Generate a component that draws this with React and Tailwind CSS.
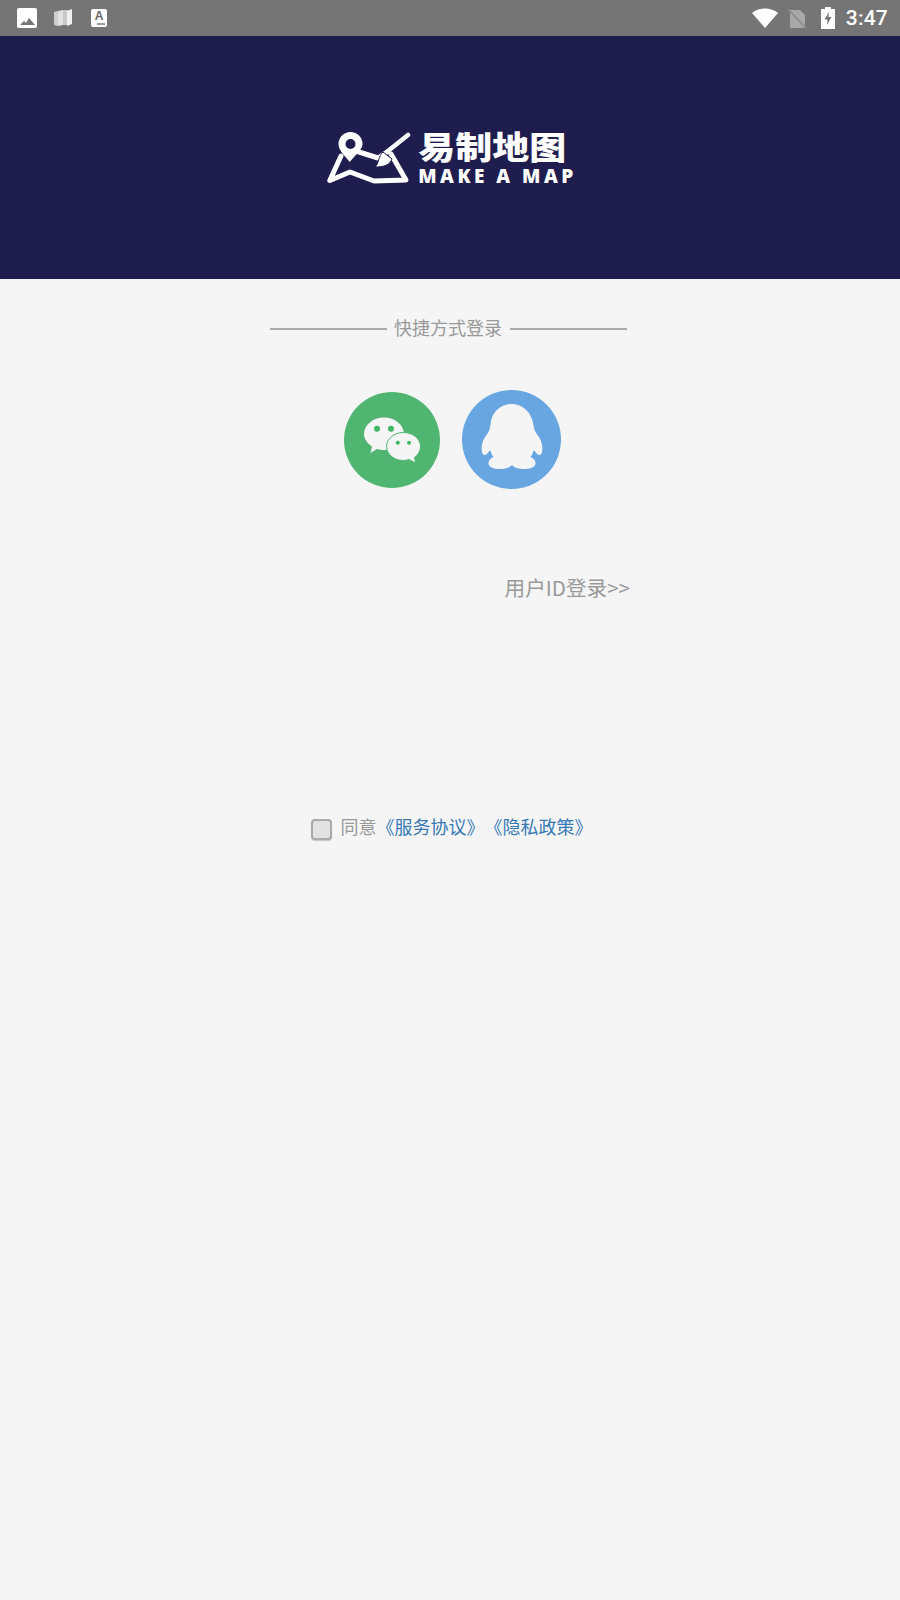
import React from "react";

const cjk = { fontFamily: '"Noto Sans CJK SC", "Noto Sans", sans-serif' };

const StatusBar = () => (
    <div className="flex h-9 items-center justify-between bg-[#757575] pl-[17px] pr-[12px]">
        <div className="flex items-center">
            {/* image */}
            <svg width="20" height="20" viewBox="0 0 20 20">
                <rect width="20" height="20" rx="2" fill="#fff" />
                <path d="M3 17l4-4 2 2 3-5 6 7z" fill="#757575" />
            </svg>
            {/* map */}
            <svg width="20" height="20" viewBox="0 0 20 20" className="ml-[16px]">
                <path d="M1 4l4-1v15l-4-1z" fill="#cfcfcf" />
                <path d="M5 3l5-1v15l-5 1z" fill="#e2e2e2" />
                <path d="M10 2l5 0v15l-5 0z" fill="#c9c9c9" />
                <path d="M14 3l5-2v15l-5 2z" fill="#f0f0f0" />
            </svg>
            {/* app icon */}
            <div className="relative ml-[18px] flex h-[18px] w-[16px] items-start justify-center rounded-[2px] bg-white">
                <span className="text-[12px] font-bold leading-[14px] text-[#666666]" style={{ fontFamily: '"Liberation Sans", sans-serif' }}>A</span>
                <div className="absolute bottom-[2px] right-[2px] h-[2px] w-[8px] bg-[#999999]" />
            </div>
        </div>
        <div className="flex items-center">
            <svg width="26" height="20" viewBox="0 0 26 20">
                <path d="M0 5C3.500 2 8 .5 13 .5S22.500 2 26 5L13 20z" fill="#fff" />
            </svg>
            <svg width="20" height="22" viewBox="0 0 20 22" className="ml-[9px]">
                <path d="M3 3h10l5 5v13H3z" fill="#a8a8a8" />
                <path d="M1 2l18 19" stroke="#8a8a8a" strokeWidth="1.500" />
            </svg>
            <svg width="14" height="22" viewBox="0 0 14 22" className="ml-[14px]">
                <path d="M4 0h6v2h4v20H0V2h4z" fill="#fff" />
                <path d="M8 5L3.500 12.500h3L6 18l4.500-8h-3z" fill="#757575" />
            </svg>
            <span className="ml-[11px] text-[21px] font-medium leading-none tracking-[0.2px] text-white" style={{ fontFamily: 'Roboto, sans-serif' }}>3:47</span>
        </div>
    </div>
);

const Logo = () => (
    <div className="flex items-center gap-[7px] pl-[4px] pt-[1px]">
        <svg width="84" height="52" viewBox="0 0 84 52" fill="none">
            <path d="M14 24L2.800 48.500 23 40l24 9 32-1-15-26" stroke="#fff" strokeWidth="5" strokeLinejoin="round" strokeLinecap="round" />
            <path d="M32 20l19 6 9-6" stroke="#fff" strokeWidth="5" strokeLinejoin="round" strokeLinecap="round" />
            <path d="M22.700 30C15 21 11.500 17 11.500 12a12 12 0 0124 0c0 5-5 9-12.800 18z" fill="#fff" />
            <circle cx="23.500" cy="12" r="5" fill="#1f1d4e" />
            <path d="M61 19L81 3" stroke="#fff" strokeWidth="4.500" strokeLinecap="round" />
            <path d="M56 20l9 7c-2 6-8 8-17 8 4-3 3-11 8-15z" fill="#fff" stroke="#1f1d4e" strokeWidth="1" />
        </svg>
        <div className="flex flex-col">
            <span className="origin-center scale-y-[0.85] text-[37px] font-black leading-[26px] text-white" style={cjk}>易制地图</span>
            <span className="mt-[9px] text-[19px] font-extrabold leading-[18px] tracking-[3.500px] text-white" style={{ fontFamily: '"Open Sans", sans-serif' }}>MAKE A MAP</span>
        </div>
    </div>
);

const WechatIcon = () => (
    <svg width="96" height="96" viewBox="0 0 96 96">
        <circle cx="48" cy="48" r="48" fill="#50b571" />
        <path d="M40 25.500c11 0 20 7.500 20 16.500 0 9-9 16-20 16-2.500 0-5-.5-7-1l-6.500 4 1.500-6.500C23 51 20 47 20 42c0-9 9-16.500 20-16.500z" fill="#f5f5f5" />
        <circle cx="33" cy="36.700" r="3" fill="#3fb565" />
        <circle cx="47" cy="36.700" r="3" fill="#3fb565" />
        <path d="M59.500 40.500c9.500 0 17 6.300 17 14 0 4.500-2.300 8-6 11l1 5.500-6.500-3.500c-2 .5-3.500 1-5.500 1-9.500 0-17-6.300-17-14s7.500-14 17-14z" fill="#f5f5f5" stroke="#50b571" strokeWidth="1" />
        <circle cx="53.800" cy="50.700" r="2" fill="#3fb565" />
        <circle cx="65" cy="50.700" r="2" fill="#3fb565" />
    </svg>
);

const QQIcon = () => (
    <svg width="99" height="99" viewBox="0 0 99 99">
        <circle cx="49.500" cy="49.500" r="49.500" fill="#68a6e2" />
        <path d="M49.500 14C61 14 70 23 71.500 35c.5 5 2.500 8 5.500 12 3 5 4 10 3 15-1 4-4 4-6.500 0-.7-1-1.500-1.500-2-1.500-.5 2.500-1.500 4.500-3 6.500 3 1 5 3.500 5 6 0 4-5 6-11 6-5.500 0-10-1-12.500-4-2.500 3-7 4-12.500 4-6 0-11-2-11-6 0-2.500 2-5 5-6-1.500-2-2.500-4-3-6.500-.5 0-1.300.5-2 1.500-2.500 4-5.500 4-6.500 0-1-5 0-10 3-15 3-4 5-7 5.500-12C29 23 38 14 49.500 14z" fill="#f5f5f5" />
    </svg>
);

export default function App() {
    return (
        <div className="flex min-h-[1600px] flex-col bg-[#f5f5f5]" style={cjk}>
            <StatusBar />
            <div className="flex h-[243px] items-center justify-center bg-[#1f1d4e]">
                <Logo />
            </div>

            <div className="mt-[34px] flex items-center justify-center gap-[7px] pr-[3px]">
                <div className="h-[2px] w-[117px] bg-[#aaaaaa]" />
                <span className="mr-[1px] pb-[4px] text-[18px] leading-[28px] text-[#999999]">快捷方式登录</span>
                <div className="h-[2px] w-[117px] bg-[#aaaaaa]" />
            </div>

            <div className="mt-[45px] flex items-center justify-center gap-[22px] pl-[4px]">
                <WechatIcon />
                <QQIcon />
            </div>

            <div className="mt-[82px] flex justify-end pr-[270px]">
                <span className="text-[20.600px] leading-[32px] text-[#999999]">用户ID登录&gt;&gt;</span>
            </div>

            <div className="mt-[209px] flex items-center justify-center pl-[3px]">
                <div className="h-[21px] w-[21px] rounded-[4px] border-2 border-[#aaaaaa] bg-[#e2e2e2] shadow-[0_1px_1px_rgba(0,0,0,0.2)]" />
                <span className="ml-[9px] pb-[6px] text-[18px] leading-[28px] text-[#999999]">同意</span>
                <span className="pb-[6px] text-[18px] leading-[28px] text-[#3579b8] [text-spacing-trim:space-all]">《服务协议》《隐私政策》</span>
            </div>
        </div>
    );
}
